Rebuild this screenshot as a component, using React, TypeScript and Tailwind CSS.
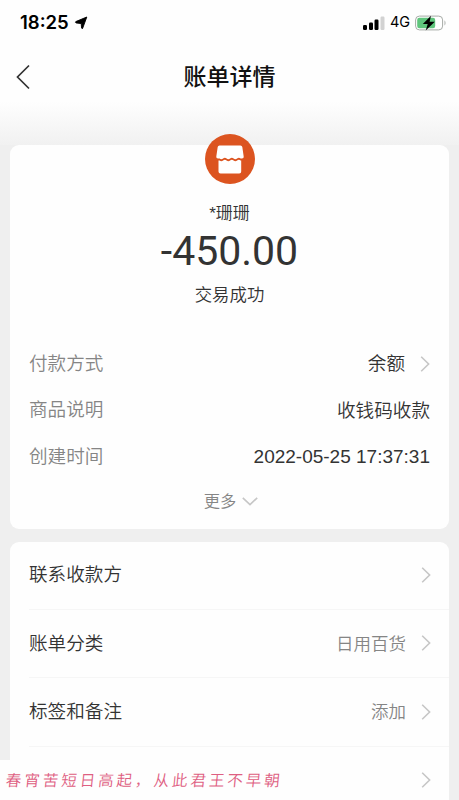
import type { ReactNode } from "react";

function Arrow() {
  return (
    <svg className="ml-[15px] block h-4 w-[10px] shrink-0" viewBox="0 0 10 16" fill="none">
      <path d="M1.2 0.8 8.6 8 1.2 15.2" stroke="#c6c6c6" strokeWidth="1.6" />
    </svg>
  );
}

function StatusBar() {
  return (
    <div className="flex h-[45px] items-center pl-[20px] pr-[11px] text-black">
      <span className="w-[52px] whitespace-nowrap font-['Inter','Liberation_Sans',sans-serif] text-[18.5px] leading-none font-semibold">
        18:25
      </span>
      <svg className="ml-[2px] h-[14px] w-[14px]" viewBox="0 0 14 14">
        <path d="M12.800 1 8.600 12.400Q8 13 7.600 12L7.200 7.600 2 6.900Q1 6.300 1.800 5.600Z" fill="#000" stroke="#000" strokeLinejoin="round" strokeWidth=".9" />
      </svg>
      <svg className="ml-auto h-[14px] w-[22px]" viewBox="0 0 22 14">
        <rect x="0" y="9" width="4" height="5" rx="1.2" />
        <rect x="6" y="6.5" width="4" height="7.5" rx="1.2" />
        <rect x="11.5" y="3.5" width="4" height="10.5" rx="1.2" />
        <rect x="17.5" y="0.5" width="4" height="13.5" rx="1.2" fill="#d2d2d2" />
      </svg>
      <span className="ml-[5px] w-[21px] whitespace-nowrap font-['Inter','Liberation_Sans',sans-serif] text-[14.500px] leading-none font-normal">
        4G
      </span>
      <svg className="ml-[4px] h-[16px] w-[33px]" viewBox="0 0 33 16">
        <rect x="0.6" y="1.100" width="27" height="13.8" rx="3.8" fill="#fff" stroke="#a6aaa6" />
        <rect x="2.2" y="2.800" width="18" height="10.400" rx="2.2" fill="#5fc57c" />
        <path d="M29.5 5.6c1.3.6 1.3 4.2 0 4.8Z" fill="#a6aaa6" />
        <path d="M16 .8 7.800 9h4.900l-2 6.6L19.800 6.800h-5.200Z" fill="#000" />
      </svg>
    </div>
  );
}

function Detail({ label, children }: { label: string; children: ReactNode }) {
  return (
    <div className="flex h-[46.500px] items-center justify-between text-[18.600px] leading-none">
      <span className="font-[350] text-[#858585]">{label}</span>
      <div className="flex items-center text-[#333]">{children}</div>
    </div>
  );
}

function ActionRow({ label, value }: { label: string; value?: string }) {
  return (
    <div className="flex h-[68.500px] shrink-0 items-center justify-between border-b border-[#f6f6f6] pr-[18px] text-[18.600px] leading-none text-[#333]">
      <span className="pt-[2px]">{label}</span>
      <div className="flex items-center">
        <span className="pt-[2px] text-[17.500px] font-[350] text-[#858585]">{value}</span>
        <Arrow />
      </div>
    </div>
  );
}

export default function App() {
  return (
    <div className="relative flex h-[800px] w-[459px] flex-col overflow-hidden bg-[#efefef] font-['Liberation_Sans','Noto_Sans_CJK_SC',sans-serif] font-[350]">
      <header className="h-[145px] shrink-0 bg-linear-to-b from-[#fefefe] from-70% to-[#f1f1f1]">
        <StatusBar />
        <div className="grid h-[63px] grid-cols-[60px_1fr_60px] items-center">
          <svg className="ml-[15px] h-[26px] w-[16px]" viewBox="0 0 16 26" fill="none">
            <path d="M14 1.500 2.500 13 14 24.500" stroke="#333" strokeWidth="1.700" />
          </svg>
          <h1 className="pt-[2px] text-center text-[23px] leading-none font-medium text-[#111]">账单详情</h1>
        </div>
      </header>

      <section className="mx-[10px] h-[384px] shrink-0 rounded-[9px] bg-[#fefefe] pr-[19px] pl-[19px]">
        <div className="-mt-[11px] flex flex-col items-center">
          <svg className="block h-[50px] w-[50px]" viewBox="0 0 50 50">
            <circle cx="25" cy="25" r="25" fill="#dc5420" />
            <path
              d="M14.500 11.500h21q1.500 0 1.800 1.500L38.700 22.500q.3 2-1.700 2l-1.400 0q-1.700-1.400-3.500 0t-3.500 0-3.500 0-3.500 0-3.500 0-3.500 0H13q-2 0-1.700-2L12.700 13Q13 11.500 14.500 11.500Z"
              fill="#fff"
            />
            <path
              d="M13.500 26.500H14.600q1.700 1.400 3.500 0 1.700-1.400 3.500 0t3.500 0 3.500 0 3.500 0 3.500 0H36.200V37.500q0 2-2 2H15.500q-2 0-2-2Z"
              fill="#fff"
            />
          </svg>
          <div className="mt-[21px] text-[17px] leading-[18px] text-[#333]">*珊珊</div>
          <div className="mt-[7px] font-['Roboto',sans-serif] text-[41px] leading-[42px] font-normal text-[#333]">-450.00</div>
          <div className="mt-[13px] text-[17.400px] leading-[20px] text-[#333]">交易成功</div>
        </div>
        <div className="mt-[36px]">
          <Detail label="付款方式">
            余额
            <Arrow />
          </Detail>
          <Detail label="商品说明">
            <span className="pt-[1px]">收钱码收款</span>
          </Detail>
          <Detail label="创建时间">
            <span className="pb-[2px] text-[19px]">2022-05-25 17:37:31</span>
          </Detail>
        </div>
        <div className="mt-[11px] flex h-[20px] items-center justify-center pl-[3px] text-[16.300px] leading-none text-[#858585]">
          更多
          <svg className="ml-[6px] h-[9px] w-[16px]" viewBox="0 0 16 9" fill="none">
            <path d="M.8.800 8 7.600 15.200.800" stroke="#c6c6c6" strokeWidth="1.600" />
          </svg>
        </div>
      </section>

      <section className="mx-[10px] mt-[13px] flex h-[300px] shrink-0 flex-col rounded-t-[9px] bg-[#fefefe] pl-[19px]">
        <div className="-mt-[1px] flex flex-col">
          <ActionRow label="联系收款方" />
          <ActionRow label="账单分类" value="日用百货" />
          <ActionRow label="标签和备注" value="添加" />
          <ActionRow label="" />
        </div>
      </section>

      <div className="absolute bottom-0 left-0 flex h-[40px] w-[284px] items-center bg-[#fefefe] pl-[6px] font-['KaiTi','STKaiti','Noto_Sans_CJK_SC',sans-serif] text-[15.500px] leading-none tracking-[2.960px] whitespace-nowrap text-[#de5f82]">
        <span className="-skew-x-6">春宵苦短日高起，从此君王不早朝</span>
      </div>
    </div>
  );
}
